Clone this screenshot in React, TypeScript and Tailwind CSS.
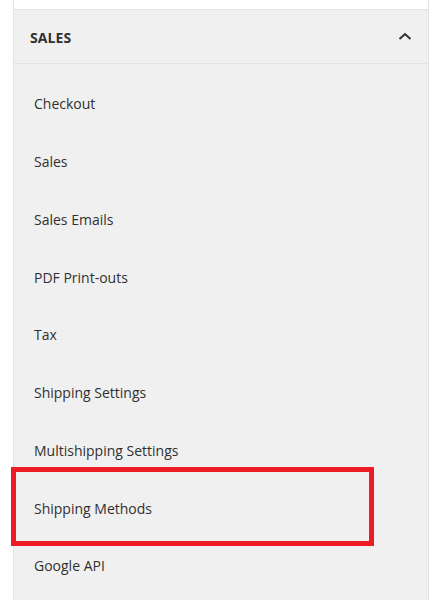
import React from "react";

const items = [
  "Checkout",
  "Sales",
  "Sales Emails",
  "PDF Print-outs",
  "Tax",
  "Shipping Settings",
  "Multishipping Settings",
  "Shipping Methods",
  "Google API",
];

export default function App() {
  return (
    <div
      className="relative w-[445px] h-[600px] bg-white overflow-hidden"
      style={{ fontFamily: "'Open Sans', 'Liberation Sans', sans-serif" }}
    >
      <div className="ml-[13px] w-[416px] h-full border-x border-[#e3e3e3] flex flex-col">
        <div className="h-[10px] bg-white border-b border-[#e3e3e3]" />
        <div className="bg-[#f0f0f0] flex-1 flex flex-col">
          <div className="h-[54px] border-b border-[#e3e3e3] flex items-center justify-between pl-[16px] pr-[16px] pt-[2px]">
            <span className="text-[14px] font-bold text-[#303030] tracking-[0.1px]">SALES</span>
            <svg width="14" height="9" viewBox="0 0 14 9" className="mt-[-2px]">
              <path d="M1.5 7 L7 2 L12.5 7" fill="none" stroke="#303030" strokeWidth="2" />
            </svg>
          </div>
          <div className="pt-[11px] flex flex-col">
            {items.map((t) => (
              <div key={t} className="h-[57.75px] flex items-center pl-[20px] text-[14px] text-[#303030]">
                {t}
              </div>
            ))}
          </div>
        </div>
      </div>
      <div className="absolute left-[11px] top-[467px] w-[363px] h-[79px] border-[5px] border-[#ed1c24]" />
    </div>
  );
}
